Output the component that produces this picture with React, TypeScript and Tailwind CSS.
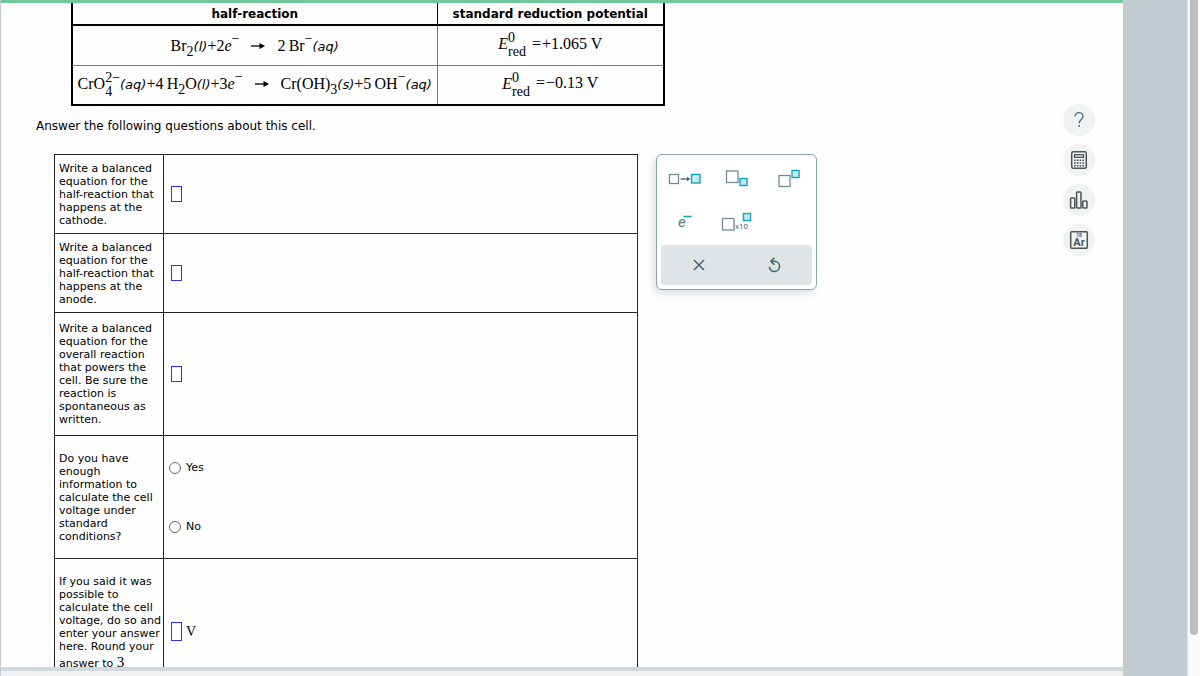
import type { ReactNode } from "react";

const questions = [
  {
    id: "cathode",
    text: "Write a balanced equation for the half-reaction that happens at the cathode.",
    height: "h-[79px]",
  },
  {
    id: "anode",
    text: "Write a balanced equation for the half-reaction that happens at the anode.",
    height: "h-[79px]",
  },
  {
    id: "overall",
    text: "Write a balanced equation for the overall reaction that powers the cell. Be sure the reaction is spontaneous as written.",
    height: "h-[123px]",
  },
];

const Phase = ({ children }: { children: ReactNode }) => (
  <span className="font-['DejaVu_Sans',sans-serif] text-[13px] italic">({children})</span>
);

const Sub = ({ children }: { children: ReactNode }) => (
  <span className="align-[-5px] text-[14px] leading-none">{children}</span>
);

const Minus = () => <span className="align-[8px] text-[14px] leading-none">−</span>;

// superscript sitting directly above a subscript
const Stack = ({ top, bottom }: { top: ReactNode; bottom: ReactNode }) => (
  <span className="inline-flex flex-col items-start align-middle text-[14px] leading-[14px]">
    <span>{top}</span>
    <span>{bottom}</span>
  </span>
);

const Arrow = () => (
  <svg className="mx-2 inline-block align-[2px]" width="14" height="6" viewBox="0 0 14 6">
    <path d="M0 3h10" stroke="#000" strokeWidth="1.3" />
    <path d="M8.5 0 14 3 8.5 6Z" />
  </svg>
);

const Potential = ({ value }: { value: string }) => (
  <>
    <i>E</i>
    <Stack top="0" bottom="red" />
    <span className="ml-[6px]">=</span>
    <span className="ml-px">{value} V</span>
  </>
);

const AnswerBox = ({ id, tall = false }: { id: string; tall?: boolean }) => (
  <input
    id={id}
    type="text"
    className={`block w-[11px] border border-[#3030ff] bg-white outline-none ${tall ? "h-[19px]" : "h-4"}`}
  />
);

const PaletteButton = ({ label, children }: { label: string; children: ReactNode }) => (
  <button type="button" aria-label={label} className="h-11">
    <svg className="mx-auto" width="50" height="44" viewBox="0 0 50 44" fill="none" stroke="#6f8d97" strokeWidth="1.3">
      {children}
    </svg>
  </button>
);

const TealBox = ({ x, y, size = 7 }: { x: number; y: number; size?: number }) => (
  <rect x={x} y={y} width={size} height={size} fill="#c8ebf1" stroke="#10a3bd" strokeWidth="1.4" />
);

const Palette = () => (
  <div className="w-[161px] shrink-0 rounded-md border border-[#87a5ae] bg-white px-1 pt-[2px] pb-1 shadow-[-3px_4px_6px_rgba(120,150,160,0.25)]">
    <div className="grid grid-cols-3">
      <PaletteButton label="Reaction arrow">
        <rect x="8.5" y="17.5" width="9" height="9" />
        <path d="M19.5 22h8" stroke="#3e626e" />
        <path d="m26 19.8 3.4 2.2-3.4 2.2Z" fill="#3e626e" stroke="none" />
        <TealBox x={30.5} y={17.5} size={8.5} />
      </PaletteButton>
      <PaletteButton label="Subscript">
        <rect x="15.5" y="14" width="11.5" height="11.5" />
        <TealBox x={29} y={21.5} />
      </PaletteButton>
      <PaletteButton label="Superscript">
        <rect x="17" y="18.5" width="11" height="11" />
        <TealBox x={30} y={13.5} />
      </PaletteButton>
      <PaletteButton label="Electron">
        <text x="17" y="26" fontSize="15" fontFamily="Roboto, sans-serif" fontStyle="italic" fill="#5c7a85" stroke="none">
          e
        </text>
        <path d="M22.5 15.5h8" stroke="#10a3bd" strokeWidth="1.6" />
      </PaletteButton>
      <PaletteButton label="Scientific notation">
        <rect x="11.5" y="17.5" width="11.5" height="11.5" />
        <text x="24" y="28" fontSize="8" fontFamily="Roboto, sans-serif" fill="#4d6c77" stroke="none">
          x10
        </text>
        <TealBox x={32.5} y={12.5} />
      </PaletteButton>
    </div>
    <div className="grid h-10 grid-cols-2 rounded bg-[#dfe5e7] text-[#3e6472]">
      <button type="button" aria-label="Clear">
        <svg className="mx-auto" width="16" height="16" viewBox="0 0 16 16" stroke="currentColor" strokeWidth="1.5">
          <path d="m3 3 10 10M13 3 3 13" />
        </svg>
      </button>
      <button type="button" aria-label="Undo">
        <svg className="mx-auto" width="16" height="16" viewBox="0 0 16 16" fill="none" stroke="currentColor" strokeWidth="1.6">
          <path d="M8.4.8 4.9 4.2l3.5 3.6" />
          <path d="M5.2 4.3h3.3a5.1 5.1 0 1 1-5.1 5.6" />
        </svg>
      </button>
    </div>
  </div>
);

const ToolButton = ({ label, children }: { label: string; children: ReactNode }) => (
  <button type="button" aria-label={label} className="flex size-8 items-center justify-center rounded-full bg-[#f1f3f3]">
    <svg width="20" height="20" viewBox="0 0 20 20" fill="none" stroke="#4b5659" strokeWidth="1.5">
      {children}
    </svg>
  </button>
);

const Toolbar = () => (
  <aside className="flex shrink-0 flex-col gap-2 pt-[101px] pr-7">
    <ToolButton label="Help">
      <path d="M6 6.6a4 4 0 0 1 8 0c0 2.8-3.9 3.2-3.9 6.6" stroke="#41697d" strokeWidth="1.3" />
      <path d="M10.1 15v1.8" stroke="#41697d" />
    </ToolButton>
    <ToolButton label="Calculator">
      <rect x="2.7" y="1.7" width="14.6" height="16.6" rx="1.5" />
      <rect x="5.5" y="4.7" width="9" height="2.6" strokeWidth="1.3" />
      <path d="M5 10.3h10M5 13h10M5 15.7h10" strokeWidth="1.6" strokeDasharray="1.7 1.1" />
    </ToolButton>
    <ToolButton label="Statistics">
      <rect x="1.6" y="8" width="4.2" height="10" rx="0.8" />
      <rect x="7.6" y="2" width="4.4" height="16" rx="0.8" />
      <rect x="13.8" y="11" width="4.2" height="7" rx="0.8" />
    </ToolButton>
    <ToolButton label="Periodic table">
      <rect x="1.7" y="1.7" width="16.6" height="16.6" rx="1" />
      <g fill="#4b5659" stroke="none" textAnchor="middle" fontFamily="Roboto, sans-serif" fontWeight="700">
        <text x="10" y="7" fontSize="5">18</text>
        <text x="10" y="16" fontSize="11">Ar</text>
      </g>
    </ToolButton>
  </aside>
);

const PotentialTable = () => (
  <table className="ml-[35px] w-[594px] border-collapse border-2 border-t-0 border-black text-center font-['Liberation_Serif',serif] text-[16px] leading-none whitespace-nowrap">
    <thead>
      <tr className="h-[22px] border-b-2 border-black font-['DejaVu_Sans',sans-serif] text-[12px]">
        <th scope="col" className="w-[365px] border-r border-black p-0">half-reaction</th>
        <th scope="col" className="p-0">standard reduction potential</th>
      </tr>
    </thead>
    <tbody>
      <tr className="h-10 border-b border-[#777]">
        <td className="border-r border-[#777] p-0">
          Br<Sub>2</Sub><Phase>l</Phase>+2<i>e</i><Minus /> <Arrow /> 2{"\u2009"}Br<Minus /><Phase>aq</Phase>
        </td>
        <td className="p-0"><Potential value="+1.065" /></td>
      </tr>
      <tr className="h-10">
        <td className="border-r border-[#777] p-0">
          CrO<Stack top="2−" bottom="4" /><Phase>aq</Phase>+4{"\u2009"}H<Sub>2</Sub>O<Phase>l</Phase>+3<i>e</i><Minus />
          {" "}<Arrow /> Cr(OH)<Sub>3</Sub><Phase>s</Phase>+5{"\u2009"}OH<Minus /><Phase>aq</Phase>
        </td>
        <td className="p-0"><Potential value="−0.13" /></td>
      </tr>
    </tbody>
  </table>
);

const questionCell = "w-[109px] border border-[#222] py-0 pr-0 pl-1 text-left font-normal";
const answerCell = "border border-[#222] py-0 pr-0 pl-[7px]";

const QuestionTable = () => (
  <table className="max-w-[584px] flex-1 border-collapse text-[11px] leading-[13px]">
    <tbody>
      {questions.map(({ id, text, height }) => (
        <tr key={id} className={height}>
          <th scope="row" className={questionCell}>
            <label htmlFor={id}>{text}</label>
          </th>
          <td className={answerCell}>
            <AnswerBox id={id} />
          </td>
        </tr>
      ))}
      <tr className="h-[123px]">
        <th scope="row" className={questionCell}>
          Do you have enough information to calculate the cell voltage under standard conditions?
        </th>
        <td className="border border-[#222] py-0 pr-0 pl-[5px]">
          <div className="flex flex-col gap-[46px]">
            {["Yes", "No"].map((option) => (
              <label key={option} className="flex items-center gap-[5px]">
                <input
                  type="radio"
                  name="enough"
                  className="size-3 appearance-none rounded-full border border-[#666] bg-white checked:border-4"
                />
                {option}
              </label>
            ))}
          </div>
        </td>
      </tr>
      <tr className="h-[146px]">
        <th scope="row" className={`${questionCell} align-top`}>
          <label htmlFor="voltage" className="block pt-4">
            If you said it was possible to calculate the cell voltage, do so and enter your answer here. Round your answer to{" "}
            <span className="font-['Liberation_Serif',serif] text-[15px] leading-[18px]">3</span>
          </label>
        </th>
        <td className={answerCell}>
          <div className="flex items-center gap-1">
            <AnswerBox id="voltage" tall />
            <span className="font-['Liberation_Serif',serif] text-[14px]">V</span>
          </div>
        </td>
      </tr>
    </tbody>
  </table>
);

const App = () => {
  return (
    <div className="flex h-screen overflow-hidden bg-[#c1cdd3] font-['DejaVu_Sans',Verdana,sans-serif] text-black">
      <div className="flex min-w-0 flex-1 flex-col border-l border-[#c1cdd3]">
        <div className="h-[3px] shrink-0 bg-[#73c698]" />
        <main className="flex min-h-0 flex-1 items-start overflow-hidden bg-[#fefefe]">
          <div className="min-w-0 flex-1 pl-[35px]">
            <PotentialTable />
            <p className="mt-3 text-[12px] leading-4">Answer the following questions about this cell.</p>
            <div className="mt-5 ml-[18px] flex items-start gap-[18px]">
              <QuestionTable />
              <Palette />
            </div>
          </div>
          <Toolbar />
        </main>
        <div className="h-1 shrink-0 bg-[#d0dade]" />
        <div className="h-[5px] shrink-0 bg-[#f0f2f4]" />
      </div>
      <div className="w-16 shrink-0" />
      <div className="w-[13px] shrink-0 border-l border-[#dfe3e5] bg-[#fafafa] px-[2px]">
        <div className="h-[94%] rounded-b-full bg-[#bfbfbf]" />
      </div>
    </div>
  );
};

export default App;
